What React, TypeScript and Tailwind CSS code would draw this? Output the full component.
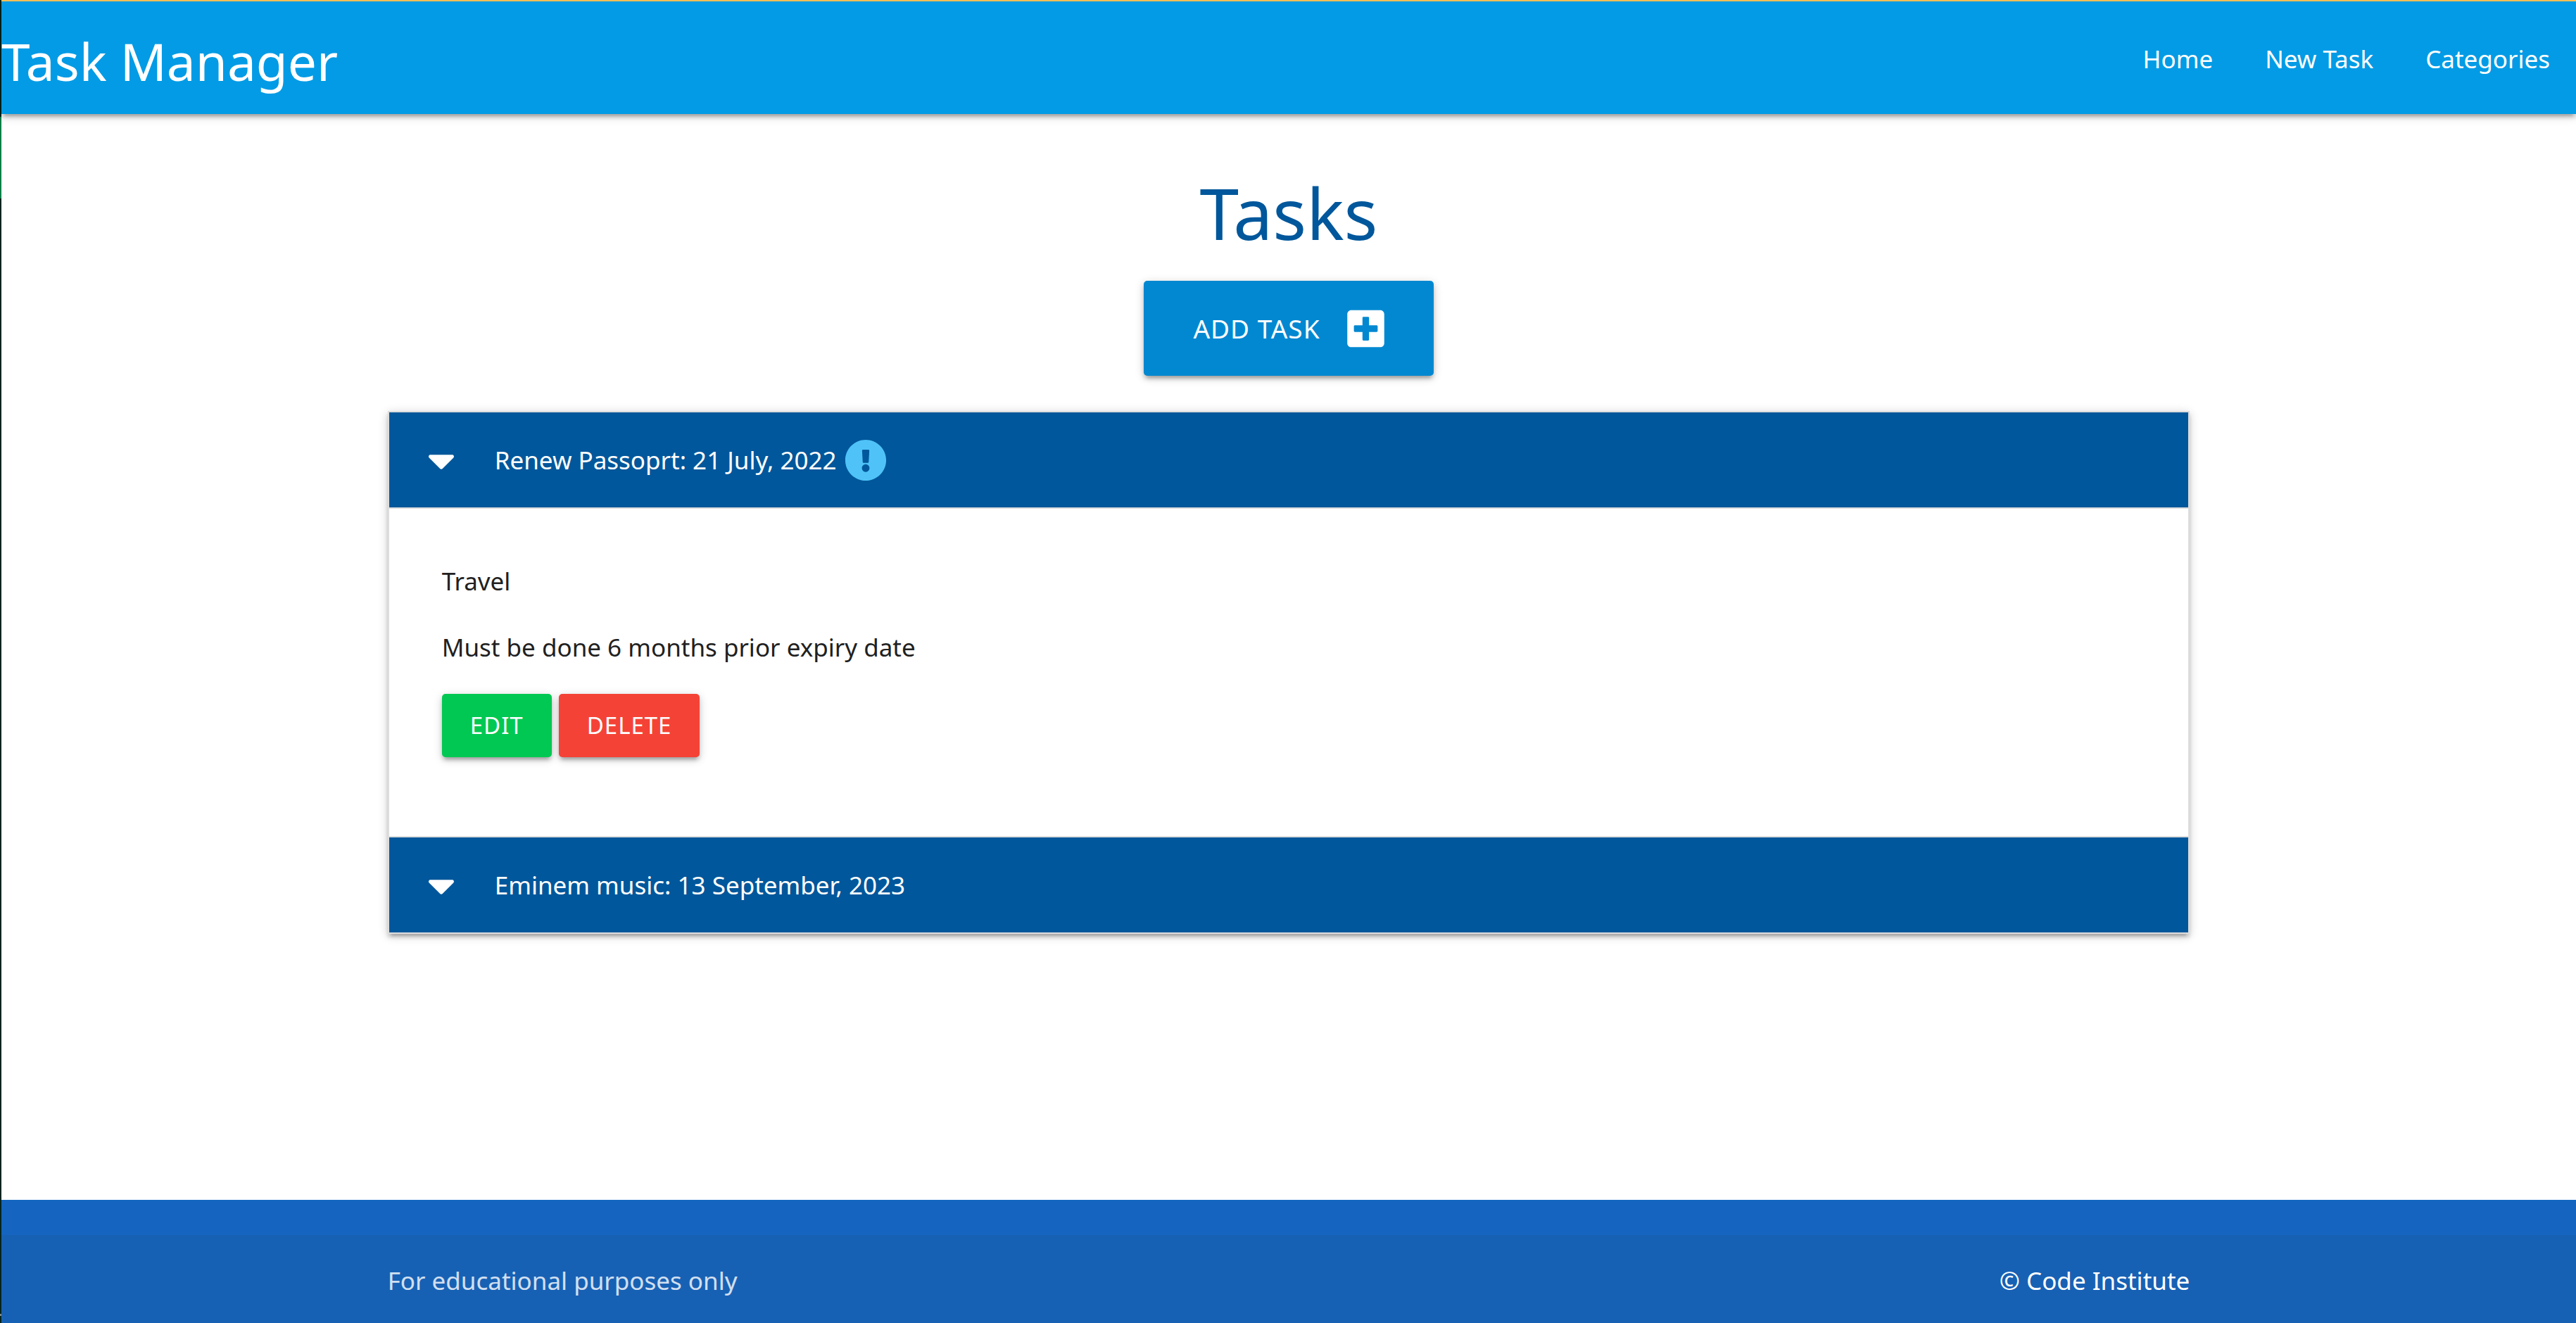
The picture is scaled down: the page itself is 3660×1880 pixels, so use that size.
import { useState } from "react";
import { FaCaretDown, FaExclamationCircle, FaPlusSquare } from "react-icons/fa";

type Task = {
  title: string;
  due: string;
  category: string;
  description: string;
  urgent: boolean;
};

const tasks: Task[] = [
  {
    title: "Renew Passoprt",
    due: "21 July, 2022",
    category: "Travel",
    description: "Must be done 6 months prior expiry date",
    urgent: true,
  },
  {
    title: "Eminem music",
    due: "13 September, 2023",
    category: "Music",
    description: "",
    urgent: false,
  },
];

const links = ["Home", "New Task", "Categories"];

function NavBar() {
  return (
    <nav className="relative flex h-[160px] items-center justify-between bg-[#039be5] text-white shadow-[0_5px_5px_0_rgba(0,0,0,0.14),0_8px_3px_-5px_rgba(0,0,0,0.12),0_3px_13px_0_rgba(0,0,0,0.2)]">
      <a href="#" className="pt-2 text-[73px] leading-none">
        Task Manager
      </a>
      <ul className="flex pt-1">
        {links.map((link) => (
          <li key={link}>
            <a href="#" className="block px-[37px]">
              {link}
            </a>
          </li>
        ))}
      </ul>
    </nav>
  );
}

function TaskItem({ task, open, onToggle }: { task: Task; open: boolean; onToggle: () => void }) {
  return (
    <li>
      <h2 className="border-b-2 border-[#dddddd]">
        <button
          type="button"
          aria-expanded={open}
          onClick={onToggle}
          className="flex h-[135px] w-full items-center bg-[#01579b] px-[37px] text-left text-white"
        >
          <span className="mr-[38px] flex w-[75px] justify-center">
            <FaCaretDown className="size-[62px]" />
          </span>
          {task.title}: {task.due}
          {task.urgent && <FaExclamationCircle className="ml-3 size-[60px] text-[#4fc3f7]" />}
        </button>
      </h2>
      {open && (
        <div className="border-b-2 border-[#dddddd] p-[75px] text-[#212121]">
          <p className="mb-[38px]">{task.category}</p>
          <p className="mb-[38px]">{task.description}</p>
          <div className="mb-[37px] flex gap-[10px]">
            <button
              type="button"
              className="h-[90px] rounded-[5px] bg-[#00c853] px-[40px] text-[33px] tracking-[1px] text-white uppercase shadow-[0_5px_5px_0_rgba(0,0,0,0.14),0_8px_3px_-5px_rgba(0,0,0,0.12),0_3px_13px_0_rgba(0,0,0,0.2)]"
            >
              Edit
            </button>
            <button
              type="button"
              className="h-[90px] rounded-[5px] bg-[#f44336] px-[40px] text-[33px] tracking-[1px] text-white uppercase shadow-[0_5px_5px_0_rgba(0,0,0,0.14),0_8px_3px_-5px_rgba(0,0,0,0.12),0_3px_13px_0_rgba(0,0,0,0.2)]"
            >
              Delete
            </button>
          </div>
        </div>
      )}
    </li>
  );
}

export default function App() {
  const [openIndex, setOpenIndex] = useState(0);

  return (
    <div className="flex min-h-screen bg-white font-['Noto_Sans','Open_Sans',sans-serif] text-[35px] leading-[56px]">
      <div className="flex w-[2px] shrink-0 flex-col bg-[#06241d]">
        <div className="mt-[166px] h-[116px] bg-[#0a8048]" />
        <div className="mt-auto mb-[10px] h-[3px] bg-[#7d8a86]" />
      </div>
      <div className="flex min-w-0 flex-1 flex-col">
        <div className="h-[2px] bg-[#ffca5c]" />
        <NavBar />
        <main className="mx-auto flex w-[70%] flex-1 flex-col items-center">
          <h1 className="mt-[79px] mb-[36px] text-[100px] leading-[122px] text-[#01579b]">Tasks</h1>
          <a
            href="#"
            className="flex h-[135px] items-center gap-[38px] rounded-[5px] bg-[#0288d1] px-[70px] text-[37px] tracking-[1px] text-white uppercase shadow-[0_5px_5px_0_rgba(0,0,0,0.14),0_8px_3px_-5px_rgba(0,0,0,0.12),0_3px_13px_0_rgba(0,0,0,0.2)]"
          >
            Add Task
            <FaPlusSquare className="h-[60px] w-[53px]" />
          </a>
          <ul className="mt-[50px] mb-[80px] w-full border-2 border-b-0 border-[#dddddd] shadow-[0_5px_5px_0_rgba(0,0,0,0.14),0_8px_3px_-5px_rgba(0,0,0,0.12),0_3px_13px_0_rgba(0,0,0,0.2)]">
            {tasks.map((task, index) => (
              <TaskItem
                key={task.title}
                task={task}
                open={index === openIndex}
                onToggle={() => setOpenIndex(index === openIndex ? -1 : index)}
              />
            ))}
          </ul>
        </main>
        <footer className="bg-[#1565c0] pt-[50px]">
          <div className="bg-[#1761b4]">
            <div className="mx-auto flex h-[125px] w-[70%] items-center justify-between pt-1 text-white/80">
              <p>For educational purposes only</p>
              <a href="#" className="text-white">
                © Code Institute
              </a>
            </div>
          </div>
        </footer>
      </div>
    </div>
  );
}
